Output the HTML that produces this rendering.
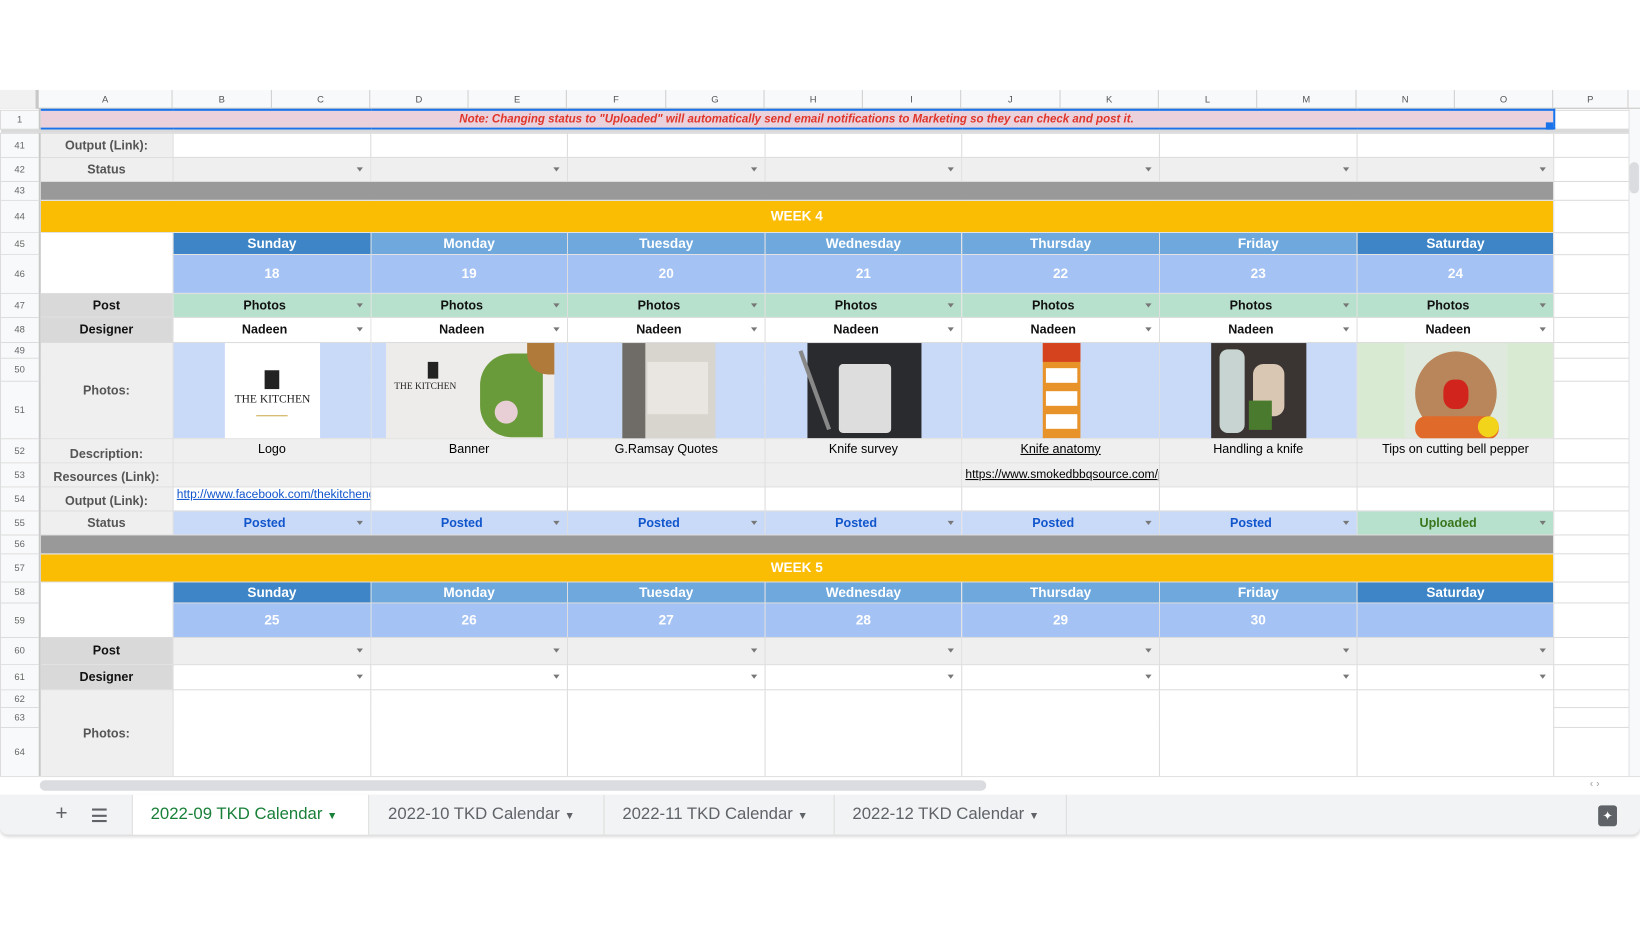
<!DOCTYPE html>
<html><head><meta charset="utf-8"><style>
*{box-sizing:border-box;margin:0;padding:0}
body{width:1640px;height:924px;overflow:hidden;background:#fff;font-family:"Liberation Sans",Arial,sans-serif}
#w{position:absolute;left:0;top:0;width:1568px;height:884px;transform:scale(1.04592);transform-origin:0 0}
.ab{position:absolute}
#ch{top:86px;left:0;height:18px;width:1568px;background:#f8f9fa;border-bottom:1px solid #c0c0c0}
#ch div{position:absolute;top:0;height:18px;line-height:18px;font-size:9px;color:#555;text-align:center;border-right:1px solid #d0d0d0}
table{position:absolute;left:0;top:104px;border-collapse:collapse;table-layout:fixed;width:1557px}
td{border:1px solid #dcdcdc;font-size:12px;text-align:center;vertical-align:middle;position:relative;overflow:hidden;white-space:nowrap;padding:0}
td.rn{background:#f8f9fa;color:#666;font-size:9px;font-weight:normal;border-right:2px solid #c8c8c8}
.lb{background:#efefef;color:#555;font-weight:bold}
.lk{background:#d9d9d9;color:#111;font-weight:bold}
.g{background:#efefef}
.grey{background:#999}
.or{background:#fbbc04;color:#fff;font-weight:bold;font-size:13px}
.dk{background:#3d85c6;color:#fff;font-weight:bold;font-size:13px}
.md{background:#6fa8dc;color:#fff;font-weight:bold;font-size:13px}
.dt{background:#a4c2f4;color:#fff;font-weight:bold;font-size:13px}
.gr{background:#b7e1cd;color:#111;font-weight:bold}
.nd{background:#fff;color:#111;font-weight:bold}
.ps{background:#c9daf8;color:#1155cc;font-weight:bold}
.up{background:#b7e1cd;color:#38761d;font-weight:bold}
.ph{background:#c9daf8}
.t{padding-right:14px}
.dd:after{content:"";position:absolute;right:7px;top:50%;margin-top:-2px;border-left:3.5px solid transparent;border-right:3.5px solid transparent;border-top:4px solid #777}
.im{position:absolute;top:0;bottom:0}
</style></head><body><div id="w">
<div id="ch" class="ab">
<div style="left:0;width:37px;background:#f1f1f1;border-right:3px solid #c8c8c8"></div>
<div style="left:37px;width:128px">A</div><div style="left:165px;width:95px">B</div><div style="left:260px;width:94px">C</div><div style="left:354px;width:94px">D</div><div style="left:448px;width:94px">E</div><div style="left:542px;width:95px">F</div><div style="left:637px;width:94px">G</div><div style="left:731px;width:94px">H</div><div style="left:825px;width:94px">I</div><div style="left:919px;width:95px">J</div><div style="left:1014px;width:94px">K</div><div style="left:1108px;width:94px">L</div><div style="left:1202px;width:95px">M</div><div style="left:1297px;width:94px">N</div><div style="left:1391px;width:94px">O</div><div style="left:1485px;width:72px">P</div>
</div>
<table>
<colgroup><col style="width:37px"><col style="width:128px"><col style="width:189px"><col style="width:188px"><col style="width:189px"><col style="width:188px"><col style="width:189px"><col style="width:189px"><col style="width:188px"><col style="width:72px"></colgroup>
<tr style="height:18px"><td class="rn">1</td><td colspan="8" style="background:#ead1dc;color:#e0362b;font-style:italic;font-weight:bold;font-size:11px;border:2px solid #1a73e8">Note: Changing status to "Uploaded" will automatically send email notifications to Marketing so they can check and post it.</td><td></td></tr>
<tr style="height:4px"><td colspan="10" style="background:#dadada;border:none"></td></tr>
<tr style="height:23px"><td class="rn">41</td><td class="lb">Output (Link):</td><td></td><td></td><td></td><td></td><td></td><td></td><td></td><td></td></tr>
<tr style="height:23px"><td class="rn">42</td><td class="lb">Status</td><td class="g dd"></td><td class="g dd"></td><td class="g dd"></td><td class="g dd"></td><td class="g dd"></td><td class="g dd"></td><td class="g dd"></td><td></td></tr>
<tr style="height:18px"><td class="rn">43</td><td colspan="8" class="grey"></td><td></td></tr>
<tr style="height:31px"><td class="rn">44</td><td colspan="8" class="or">WEEK 4</td><td></td></tr>
<tr style="height:21px"><td class="rn">45</td><td rowspan="2" style="background:#fff"></td><td class="dk">Sunday</td><td class="md">Monday</td><td class="md">Tuesday</td><td class="md">Wednesday</td><td class="md">Thursday</td><td class="md">Friday</td><td class="dk">Saturday</td><td></td></tr>
<tr style="height:37px"><td class="rn">46</td><td class="dt">18</td><td class="dt">19</td><td class="dt">20</td><td class="dt">21</td><td class="dt">22</td><td class="dt">23</td><td class="dt">24</td><td></td></tr>
<tr style="height:23px"><td class="rn">47</td><td class="lk">Post</td><td class="gr dd t">Photos</td><td class="gr dd t">Photos</td><td class="gr dd t">Photos</td><td class="gr dd t">Photos</td><td class="gr dd t">Photos</td><td class="gr dd t">Photos</td><td class="gr dd t">Photos</td><td></td></tr>
<tr style="height:24px"><td class="rn">48</td><td class="lk">Designer</td><td class="nd dd t">Nadeen</td><td class="nd dd t">Nadeen</td><td class="nd dd t">Nadeen</td><td class="nd dd t">Nadeen</td><td class="nd dd t">Nadeen</td><td class="nd dd t">Nadeen</td><td class="nd dd t">Nadeen</td><td></td></tr>
<tr style="height:15px"><td class="rn">49</td><td rowspan="3" class="lb">Photos:</td>
<td rowspan="3" class="ph"><div class="im" style="left:49px;width:91px;background:#fff"><div style="position:absolute;left:38px;top:26px;width:14px;height:18px;background:#222"></div><div style="position:absolute;left:0;right:0;top:48px;font-family:'Liberation Serif',serif;font-size:11px;color:#222">THE KITCHEN</div><div style="position:absolute;left:30px;top:62px;width:30px;height:8px;border-bottom:1px solid #c9a94a"></div></div></td>
<td rowspan="3" class="ph"><div class="im" style="left:14px;width:161px;background:#eeecea"><div style="position:absolute;left:40px;top:18px;width:10px;height:16px;background:#222"></div><div style="position:absolute;left:8px;top:36px;font-family:'Liberation Serif',serif;font-size:9px;color:#222">THE KITCHEN</div><div style="position:absolute;left:90px;top:10px;width:60px;height:80px;background:#6a9b3a;border-radius:30px 0 0 30px"></div><div style="position:absolute;left:135px;top:0;width:26px;height:30px;background:#b07a3a;border-radius:0 0 0 20px"></div><div style="position:absolute;left:104px;top:55px;width:22px;height:22px;background:#e8cfd6;border-radius:50%"></div></div></td>
<td rowspan="3" class="ph"><div class="im" style="left:52px;width:89px;background:#d8d4ce"><div style="position:absolute;left:0;top:0;width:22px;height:92px;background:#6f6b66"></div><div style="position:absolute;left:24px;top:18px;width:58px;height:50px;background:#e9e6e1"></div></div></td>
<td rowspan="3" class="ph"><div class="im" style="left:40px;width:109px;background:#2a2b2e"><div style="position:absolute;left:30px;top:20px;width:50px;height:66px;background:#ddd;border-radius:4px"></div><div style="position:absolute;left:5px;top:5px;width:4px;height:80px;background:#888;transform:rotate(-20deg)"></div></div></td>
<td rowspan="3" class="ph"><div class="im" style="left:77px;width:36px;background:#e8922a"><div style="position:absolute;left:3px;top:24px;width:30px;height:14px;background:#fff"></div><div style="position:absolute;left:3px;top:46px;width:30px;height:14px;background:#fff"></div><div style="position:absolute;left:3px;top:68px;width:30px;height:14px;background:#fff"></div><div style="position:absolute;left:0;top:0;width:36px;height:18px;background:#d4431e"></div></div></td>
<td rowspan="3" class="ph"><div class="im" style="left:49px;width:91px;background:#3a3532"><div style="position:absolute;left:40px;top:20px;width:30px;height:50px;background:#d9c6b3;border-radius:10px"></div><div style="position:absolute;left:8px;top:6px;width:24px;height:80px;background:#c8d4d2;border-radius:8px"></div><div style="position:absolute;left:36px;top:55px;width:22px;height:28px;background:#4a7a2e"></div></div></td>
<td rowspan="3" style="background:#d9ead3"><div class="im" style="left:45px;width:98px;background:#dfe9dd"><div style="position:absolute;left:10px;top:8px;width:78px;height:80px;background:#b9855a;border-radius:50%"></div><div style="position:absolute;left:37px;top:35px;width:24px;height:28px;background:#d0241c;border-radius:40%"></div><div style="position:absolute;left:10px;top:70px;width:80px;height:22px;background:#e06a2a;border-radius:10px"></div><div style="position:absolute;left:70px;top:70px;width:20px;height:20px;background:#f2d41a;border-radius:50%"></div></div></td>
<td></td></tr>
<tr style="height:22px"><td class="rn">50</td><td></td></tr>
<tr style="height:55px"><td class="rn">51</td><td></td></tr>
<tr style="height:23px"><td class="rn">52</td><td class="lb" style="padding-top:6px">Description:</td><td class="g" style="vertical-align:top;padding-top:2px">Logo</td><td class="g" style="vertical-align:top;padding-top:2px">Banner</td><td class="g" style="vertical-align:top;padding-top:2px">G.Ramsay Quotes</td><td class="g" style="vertical-align:top;padding-top:2px">Knife survey</td><td class="g" style="vertical-align:top;padding-top:2px;text-decoration:underline">Knife anatomy</td><td class="g" style="vertical-align:top;padding-top:2px">Handling a knife</td><td class="g" style="vertical-align:top;padding-top:2px">Tips on cutting bell pepper</td><td></td></tr>
<tr style="height:23px"><td class="rn">53</td><td class="lb" style="padding-top:4px">Resources (Link):</td><td class="g"></td><td class="g"></td><td class="g"></td><td class="g"></td><td class="g" style="text-align:left;padding-left:3px;text-decoration:underline;font-size:11.5px">https://www.smokedbbqsource.com/pa</td><td class="g"></td><td class="g"></td><td></td></tr>
<tr style="height:23px"><td class="rn">54</td><td class="lb" style="padding-top:4px">Output (Link):</td><td style="text-align:left;padding-left:3px;color:#1155cc;text-decoration:underline;font-size:11.5px;vertical-align:top;padding-top:1px">http://www.facebook.com/thekitchendis</td><td></td><td></td><td></td><td></td><td></td><td></td><td></td></tr>
<tr style="height:23px"><td class="rn">55</td><td class="lb">Status</td><td class="ps dd t">Posted</td><td class="ps dd t">Posted</td><td class="ps dd t">Posted</td><td class="ps dd t">Posted</td><td class="ps dd t">Posted</td><td class="ps dd t">Posted</td><td class="up dd t">Uploaded</td><td></td></tr>
<tr style="height:18px"><td class="rn">56</td><td colspan="8" class="grey"></td><td></td></tr>
<tr style="height:27px"><td class="rn">57</td><td colspan="8" class="or">WEEK 5</td><td></td></tr>
<tr style="height:20px"><td class="rn">58</td><td rowspan="2" style="background:#fff"></td><td class="dk">Sunday</td><td class="md">Monday</td><td class="md">Tuesday</td><td class="md">Wednesday</td><td class="md">Thursday</td><td class="md">Friday</td><td class="dk">Saturday</td><td></td></tr>
<tr style="height:33px"><td class="rn">59</td><td class="dt">25</td><td class="dt">26</td><td class="dt">27</td><td class="dt">28</td><td class="dt">29</td><td class="dt">30</td><td class="dt"></td><td></td></tr>
<tr style="height:26px"><td class="rn">60</td><td class="lk">Post</td><td class="g dd"></td><td class="g dd"></td><td class="g dd"></td><td class="g dd"></td><td class="g dd"></td><td class="g dd"></td><td class="g dd"></td><td></td></tr>
<tr style="height:24px"><td class="rn">61</td><td class="lk">Designer</td><td class="dd"></td><td class="dd"></td><td class="dd"></td><td class="dd"></td><td class="dd"></td><td class="dd"></td><td class="dd"></td><td></td></tr>
<tr style="height:17px"><td class="rn">62</td><td rowspan="3" class="lb">Photos:</td><td rowspan="3"></td><td rowspan="3"></td><td rowspan="3"></td><td rowspan="3"></td><td rowspan="3"></td><td rowspan="3"></td><td rowspan="3"></td><td></td></tr>
<tr style="height:19px"><td class="rn">63</td><td></td></tr>
<tr style="height:48px"><td class="rn">64</td><td></td></tr>
</table>
<div class="ab" style="left:1478px;top:117px;width:7px;height:7px;background:#1a73e8"></div>
<div class="ab" style="left:1557px;top:104px;width:11px;height:638px;background:#f8f9fa;border-left:1px solid #e0e0e0"></div>
<div class="ab" style="left:1558px;top:155px;width:9px;height:30px;background:#dadce0;border-radius:5px"></div>
<div class="ab" style="left:0;top:742px;width:1568px;height:18px;background:#fff;border-top:1px solid #e0e0e0"></div>
<div class="ab" style="left:38px;top:746px;width:905px;height:10px;background:#dadce0;border-radius:5px"></div>
<div class="ab" style="left:1520px;top:744px;font-size:10px;color:#999">‹ ›</div>
<div class="ab" style="left:0;top:760px;width:1568px;height:38px;background:#f1f3f4;border-bottom-left-radius:8px;border-bottom-right-radius:8px;box-shadow:0 2px 3px rgba(0,0,0,.15)"></div>
<div class="ab" style="left:53px;top:767px;font-size:20px;color:#5f6368">+</div>
<div class="ab" style="left:88px;top:773px;width:14px;height:13px;border-top:2px solid #5f6368;border-bottom:2px solid #5f6368"><div style="margin-top:3.5px;height:2px;background:#5f6368"></div></div>
<div class="ab" style="left:126px;top:760px;width:227px;height:38px;background:#fff;border-right:1px solid #ddd;border-left:1px solid #ddd"></div>
<div class="ab" style="left:144px;top:770px;font-size:16px;color:#188038">2022-09 TKD Calendar <span style="font-size:10px">▼</span></div>
<div class="ab" style="left:371px;top:770px;font-size:16px;color:#5f6368">2022-10 TKD Calendar <span style="font-size:10px">▼</span></div>
<div class="ab" style="left:577px;top:760px;width:1px;height:38px;background:#ddd"></div>
<div class="ab" style="left:595px;top:770px;font-size:16px;color:#5f6368">2022-11 TKD Calendar <span style="font-size:10px">▼</span></div>
<div class="ab" style="left:797px;top:760px;width:1px;height:38px;background:#ddd"></div>
<div class="ab" style="left:815px;top:770px;font-size:16px;color:#5f6368">2022-12 TKD Calendar <span style="font-size:10px">▼</span></div>
<div class="ab" style="left:1019px;top:760px;width:1px;height:38px;background:#ddd"></div>
<div class="ab" style="left:1528px;top:770px;width:18px;height:20px;background:#5f6368;border-radius:3px;color:#fff;font-size:12px;text-align:center;line-height:20px">✦</div>
</div></body></html>
